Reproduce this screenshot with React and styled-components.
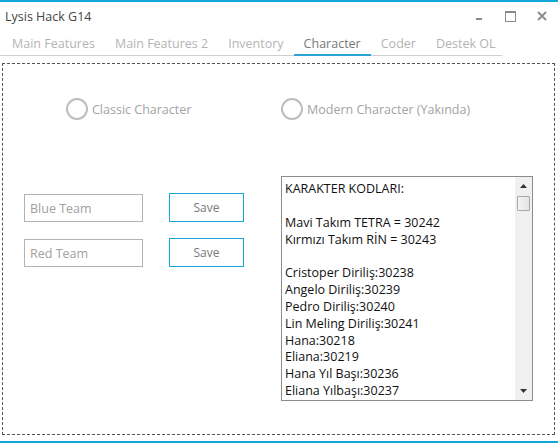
import React from 'react';
import styled, { createGlobalStyle } from 'styled-components';

const GlobalStyle = createGlobalStyle`
  html, body {
    margin: 0;
    padding: 0;
    background: #fff;
  }
  body {
    font-family: "Open Sans", "Noto Sans", sans-serif;
  }
`;

const Window = styled.div`
  width: 558px;
  height: 443px;
  box-sizing: border-box;
  border-top: 2px solid #12a6da;
  border-bottom: 2px solid #12a6da;
  display: flex;
  flex-direction: column;
  background: #fff;
`;

const TitleBar = styled.div`
  height: 28px;
  display: flex;
  align-items: center;
  justify-content: space-between;
  padding-left: 5px;
`;

const Title = styled.span`
  font-size: 12.5px;
  color: #454545;
`;

const Controls = styled.div`
  display: flex;
  align-items: center;
  height: 100%;
`;

const ControlBtn = styled.div`
  width: ${p => p.w}px;
  height: 28px;
  display: flex;
  align-items: center;
  justify-content: center;
`;

const TabStrip = styled.div`
  width: 502px;
  height: 24px;
  margin-top: 2px;
  display: flex;
  padding-left: 2px;
  box-sizing: border-box;
  border-bottom: 1px solid #cfcfcf;
`;

const Tab = styled.div`
  padding: 0 10px;
  font-size: 12.5px;
  line-height: 23px;
  color: ${p => (p.active ? '#777' : '#b4b4b4')};
  border-bottom: 2px solid ${p => (p.active ? '#29a4d3' : 'transparent')};
  margin-bottom: -1px;
  white-space: nowrap;
`;

const Panel = styled.div`
  flex: 1;
  margin: 7px 3px 6px 2px;
  border: 1px dashed #555;
  padding-top: 34px;
  display: flex;
  flex-direction: column;
`;

const RadioRow = styled.div`
  display: grid;
  grid-template-columns: 278px 1fr;
`;

const Radio = styled.label`
  display: flex;
  align-items: center;
  gap: 4px;
  margin-left: ${p => p.offset || 0}px;
  font-size: 12.5px;
  color: #a3a3a3;
  height: 22px;
`;

const RadioCircle = styled.span`
  width: 18px;
  height: 18px;
  border: 2px solid #bdbdbd;
  border-radius: 50%;
  flex-shrink: 0;
`;

const Body = styled.div`
  display: flex;
  margin-top: 56px;
`;

const Form = styled.div`
  width: 278px;
  box-sizing: border-box;
  padding: 17px 0 0 21px;
  display: flex;
  flex-direction: column;
  gap: 16px;
`;

const FormRow = styled.div`
  display: flex;
  align-items: flex-end;
  gap: 26px;
`;

const Field = styled.div`
  width: 119px;
  height: 28px;
  box-sizing: border-box;
  border: 1px solid #b3b3b3;
  padding-left: 5px;
  display: flex;
  align-items: center;
  font-size: 12.5px;
  color: #a0a0a0;
`;

const SaveButton = styled.div`
  width: 75px;
  height: 29px;
  box-sizing: border-box;
  border: 1px solid #17a6d8;
  display: flex;
  align-items: center;
  justify-content: center;
  font-size: 12px;
  color: #7a7a7a;
`;

const CodeBox = styled.div`
  width: 252px;
  height: 225px;
  box-sizing: border-box;
  border: 1px solid #8c8c8c;
  display: flex;
  overflow: hidden;
`;

const CodeText = styled.div`
  flex: 1;
  padding: 4px 0 0 3px;
  font-size: 12.5px;
  line-height: 16.85px;
  color: #111;
  white-space: pre;
  overflow: hidden;
`;

const ScrollTrack = styled.div`
  width: 17px;
  background: #f0f0f0;
  display: flex;
  flex-direction: column;
  align-items: center;
`;

const ScrollArrow = styled.div`
  width: 17px;
  height: 18px;
  display: flex;
  align-items: center;
  justify-content: center;
`;

const Thumb = styled.div`
  width: 13px;
  height: 15px;
  margin-top: 1px;
  box-sizing: border-box;
  border: 1px solid #a8a8a8;
  border-radius: 1px;
  background: linear-gradient(to right, #f4f4f4, #e3e3e3);
`;

const Spacer = styled.div`
  flex: 1;
`;

const tabs = ['Main Features', 'Main Features 2', 'Inventory', 'Character', 'Coder', 'Destek OL'];

const codes = [
  'KARAKTER KODLARI:',
  '',
  'Mavi Takım TETRA = 30242',
  'Kırmızı Takım RİN = 30243',
  '',
  'Cristoper Diriliş:30238',
  'Angelo Diriliş:30239',
  'Pedro Diriliş:30240',
  'Lin Meling Diriliş:30241',
  'Hana:30218',
  'Eliana:30219',
  'Hana Yıl Başı:30236',
  'Eliana Yılbaşı:30237',
];

const Arrow = ({ down }) => (
  <svg width="7" height="4" viewBox="0 0 7 4">
    <path d={down ? 'M0 0 H7 L3.5 4 Z' : 'M0 4 H7 L3.5 0 Z'} fill="#333" />
  </svg>
);

const App = () => (
  <>
    <GlobalStyle />
    <Window>
      <TitleBar>
        <Title>Lysis Hack G14</Title>
        <Controls>
          <ControlBtn w={30}>
            <svg width="6" height="10" viewBox="0 0 6 10">
              <rect x="0" y="7" width="6" height="2" fill="#8a8a8a" />
            </svg>
          </ControlBtn>
          <ControlBtn w={32}>
            <svg width="11" height="11" viewBox="0 0 11 11">
              <rect x="0.5" y="0.5" width="10" height="10" fill="none" stroke="#8a8a8a" />
              <rect x="0.5" y="0.5" width="10" height="1.5" fill="#8a8a8a" />
            </svg>
          </ControlBtn>
          <ControlBtn w={32}>
            <svg width="10" height="10" viewBox="0 0 10 10">
              <path d="M1 1 L9 9 M9 1 L1 9" stroke="#8a8a8a" strokeWidth="1.8" />
            </svg>
          </ControlBtn>
        </Controls>
      </TitleBar>

      <TabStrip>
        {tabs.map(t => (
          <Tab key={t} active={t === 'Character'}>{t}</Tab>
        ))}
      </TabStrip>

      <Panel>
        <RadioRow>
          <Radio offset={63}>
            <RadioCircle />
            Classic Character
          </Radio>
          <Radio>
            <RadioCircle />
            Modern Character (Yakında)
          </Radio>
        </RadioRow>

        <Body>
          <Form>
            <FormRow>
              <Field>Blue Team</Field>
              <SaveButton>Save</SaveButton>
            </FormRow>
            <FormRow>
              <Field>Red Team</Field>
              <SaveButton>Save</SaveButton>
            </FormRow>
          </Form>

          <CodeBox>
            <CodeText>{codes.join('\n')}</CodeText>
            <ScrollTrack>
              <ScrollArrow><Arrow /></ScrollArrow>
              <Thumb />
              <Spacer />
              <ScrollArrow><Arrow down /></ScrollArrow>
            </ScrollTrack>
          </CodeBox>
        </Body>
      </Panel>
    </Window>
  </>
);

export default App;
